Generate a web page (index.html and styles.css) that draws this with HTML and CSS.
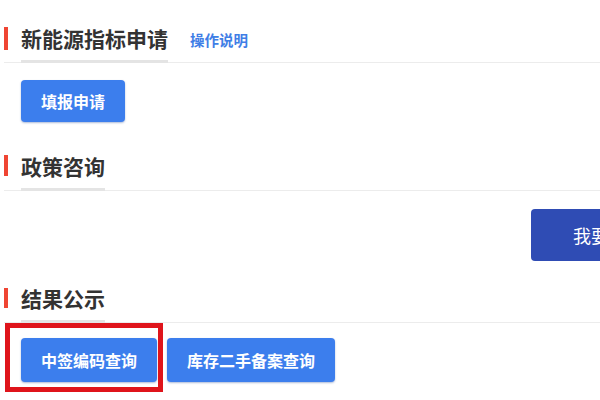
FILE: index.html
```html
<!DOCTYPE html>
<html lang="zh-CN">
<head>
<meta charset="utf-8">
<title>新能源指标</title>
<link rel="stylesheet" href="styles.css">
</head>
<body>
<div class="page">
  <section class="sec sec-apply">
    <div class="sec-head">
      <span class="mark"></span>
      <h2 class="sec-title">新能源指标申请</h2>
      <a class="help-link" href="#">操作说明</a>
    </div>
    <div class="sec-body">
      <a class="btn" href="#">填报申请</a>
    </div>
  </section>

  <section class="sec sec-policy">
    <div class="sec-head">
      <span class="mark"></span>
      <h2 class="sec-title">政策咨询</h2>
    </div>
    <div class="sec-body body-right">
      <a class="btn btn-dark" href="#">我要咨询</a>
    </div>
  </section>

  <section class="sec sec-result">
    <div class="sec-head">
      <span class="mark"></span>
      <h2 class="sec-title">结果公示</h2>
    </div>
    <div class="sec-body body-row">
      <a class="btn btn-tall" href="#">中签编码查询</a>
      <a class="btn btn-tall" href="#">库存二手备案查询</a>
      <span class="highlight-box"></span>
    </div>
  </section>
</div>
</body>
</html>
```

FILE: styles.css
```css
html {
  overflow: hidden;
}

html, body {
  margin: 0;
  padding: 0;
  background: #ffffff;
}

body {
  font-family: "Noto Sans CJK SC", "Noto Sans", "Liberation Sans", sans-serif;
  color: #333333;
  height: 400px;
}

.page {
  width: 700px;
  padding-left: 4px;
}

.sec-head {
  display: flex;
  align-items: flex-start;
  border-bottom: 1px solid #ececec;
}

.mark {
  width: 4px;
  height: 23px;
  background: #ef4533;
  flex: none;
}

.sec-title {
  margin: 0 0 -1px 13px;
  font-size: 21px;
  line-height: 23px;
  font-weight: 700;
  color: #333333;
  padding-bottom: 10px;
  border-bottom: 3px solid #e4e4e4;
}

.help-link {
  margin: 3px 0 0 22px;
  font-size: 14.5px;
  line-height: 20px;
  font-weight: 700;
  color: #3f7ee6;
  text-decoration: none;
}

.sec-apply {
  padding-top: 27px;
}

.sec-apply .sec-body {
  padding: 17px 0 0 17px;
}

.sec-policy {
  margin-top: 33px;
}

.sec-policy .mark {
  height: 21px;
}

.body-right {
  display: flex;
  justify-content: flex-end;
  padding: 18px 17px 0 0;
}

.sec-result {
  margin-top: 26px;
}

.sec-result .mark {
  height: 20px;
  margin-top: 1px;
}

.body-row {
  position: relative;
  display: flex;
  gap: 10px;
  padding: 15px 0 0 17px;
}

.btn {
  display: inline-flex;
  align-items: center;
  justify-content: center;
  height: 42px;
  padding: 0 20px;
  background: #3c7eed;
  color: #ffffff;
  font-size: 16px;
  font-weight: 700;
  text-decoration: none;
  border-radius: 4px;
  box-shadow: 0 1px 2px rgba(20, 60, 140, 0.35);
  white-space: nowrap;
}

.btn-tall {
  height: 44px;
}

.btn-dark {
  height: 52px;
  padding: 0 42px;
  background: #2f4cb4;
  font-size: 18px;
  font-weight: 400;
  border-radius: 4px;
  box-shadow: none;
}

.highlight-box {
  position: absolute;
  left: 1px;
  top: 0;
  width: 148px;
  height: 59px;
  border: 5px solid #df141b;
}
```
